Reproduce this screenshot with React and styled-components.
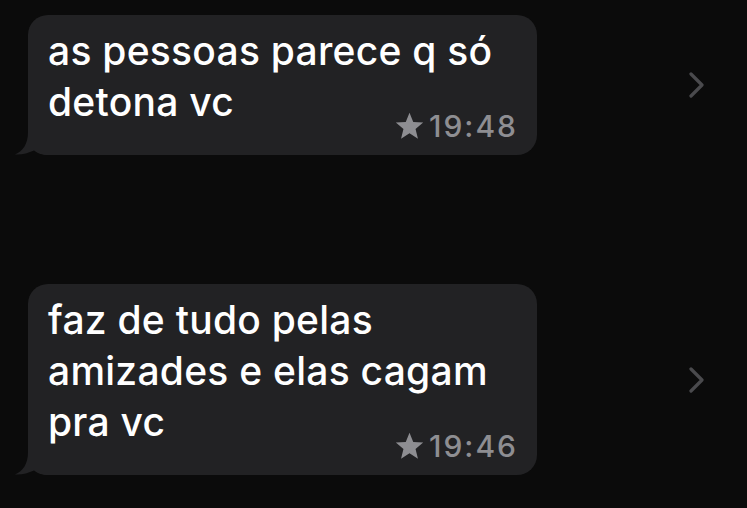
import React from 'react';
import styled, { createGlobalStyle } from 'styled-components';

const GlobalStyle = createGlobalStyle`
  html, body {
    margin: 0;
    padding: 0;
    background: #0b0b0b;
  }
  body {
    font-family: Inter, "Liberation Sans", Arial, sans-serif;
  }
`;

const Screen = styled.div`
  width: 747px;
  height: 508px;
  background: #0b0b0b;
  display: flex;
  flex-direction: column;
  gap: 129px;
  padding: 15px 42px 0 28px;
  box-sizing: border-box;
  overflow: hidden;
`;

const Row = styled.div`
  display: flex;
  align-items: center;
  justify-content: space-between;
`;

const Bubble = styled.div`
  position: relative;
  width: 509px;
  box-sizing: border-box;
  background: #222224;
  border-radius: 20px;
  padding: 10px 21px 0 20px;
  display: flex;
  flex-direction: column;
  align-items: flex-start;
`;

const Line = styled.span`
  display: block;
  color: #fff;
  font-size: 39px;
  font-weight: 500;
  line-height: 51px;
  letter-spacing: 0.25px;
  white-space: nowrap;
`;

const Meta = styled.div`
  align-self: flex-end;
  display: flex;
  align-items: center;
  gap: 5px;
  height: 28px;
  margin: -15px 0 15px;
  color: #8e8e92;
  font-size: 30px;
  font-weight: 500;
  letter-spacing: 2px;
  line-height: 28px;
`;

const Time = styled.span`
  margin-right: -2px;
`;

const Tail = styled.svg`
  position: absolute;
  left: -13px;
  bottom: 0;
`;

const Chevron = styled.svg`
  flex-shrink: 0;
`;

const Star = () => (
  <svg width="29" height="28" viewBox="0 0 24 23">
    <path
      fill="#8e8e92"
      d="M12 0.5l3.1 7.6 8.2 0.6-6.3 5.3 2 8-7-4.4-7 4.4 2-8L0.7 8.7l8.2-0.6z"
    />
  </svg>
);

const messages = [
  { id: 1, lines: ['as pessoas parece q só', 'detona vc'], time: '19:48' },
  { id: 2, lines: ['faz de tudo pelas', 'amizades e elas cagam', 'pra vc'], time: '19:46' },
];

function Message({ lines, time }) {
  return (
    <Row>
      <Bubble>
        <Tail width="34" height="23" viewBox="0 0 34 23">
          <path
            fill="#222224"
            d="M13 0 C13 12 8 19 0 22.5 C7 23 13 21 19 18.5 C23 21.5 27 23 34 23 L34 0 Z"
          />
        </Tail>
        {lines.map((l, i) => (
          <Line key={i}>{l}</Line>
        ))}
        <Meta>
          <Star />
          <Time>{time}</Time>
        </Meta>
      </Bubble>
      <Chevron width="16" height="26" viewBox="0 0 16 26">
        <polyline
          points="2,2 13,13 2,24"
          fill="none"
          stroke="#4a4a4d"
          strokeWidth="3.2"
          strokeLinecap="round"
          strokeLinejoin="round"
        />
      </Chevron>
    </Row>
  );
}

export default function App() {
  return (
    <>
      <GlobalStyle />
      <Screen>
        {messages.map((m) => (
          <Message key={m.id} lines={m.lines} time={m.time} />
        ))}
      </Screen>
    </>
  );
}
